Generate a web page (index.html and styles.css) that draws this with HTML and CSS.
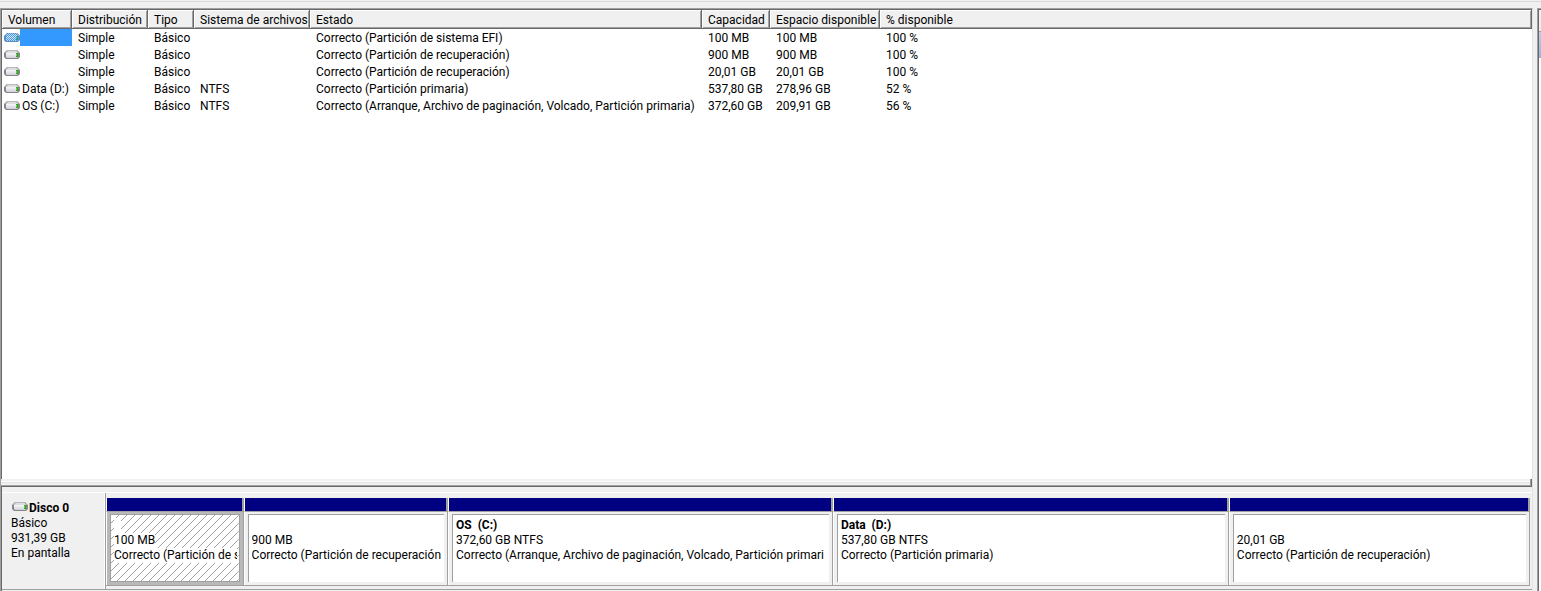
FILE: index.html
```html
<!DOCTYPE html>
<html lang="es">
<head>
  <meta charset="UTF-8" />
  <meta name="viewport" content="width=device-width, initial-scale=1.0" />
  <title>Administración de discos</title>
  <link rel="stylesheet" href="styles.css">
</head>
<body>
  <svg class="defs" width="0" height="0" aria-hidden="true">
    <defs>
      <linearGradient id="metal" x1="0" y1="0" x2="0" y2="1">
        <stop offset="0" stop-color="#f6f6fa" />
        <stop offset="1" stop-color="#d0d0da" />
      </linearGradient>
      <pattern id="dots" width="2" height="2" patternUnits="userSpaceOnUse">
        <rect width="1" height="1" fill="#3399ff" />
        <rect x="1" y="1" width="1" height="1" fill="#3399ff" />
      </pattern>
      <pattern id="lines" width="8" height="8" patternUnits="userSpaceOnUse">
        <path d="M0 7h1v1h-1zM1 6h1v1h-1zM2 5h1v1h-1zM3 4h1v1h-1zM4 3h1v1h-1zM5 2h1v1h-1zM6 1h1v1h-1zM7 0h1v1h-1z" fill="#a0a0a0" />
      </pattern>
      <symbol id="drive" viewBox="0 0 16 10">
        <path d="M3 1H13L16 4V8L14 10H2L0 8V4Z" fill="#85858c" />
        <path d="M3 1H13L15 4H1Z" fill="#b8b8bc" />
        <path d="M4 2H12L14 4H2Z" fill="#dededf" />
        <path d="M2 4H14V8L13 9H3L2 8Z" fill="url(#metal)" />
        <path d="M12 4h2v4h-2z" fill="#2fa51e" />
        <path d="M12 5h1v2h-1z" fill="#63d84a" />
      </symbol>
    </defs>
  </svg>

  <div class="toolbar-edge"></div>
  <div class="window">
    <main class="console">
      <section class="volumes">
        <table>
          <colgroup>
            <col class="col-volume"><col class="col-layout"><col class="col-type"><col class="col-fs">
            <col class="col-status"><col class="col-capacity"><col class="col-free"><col>
          </colgroup>
          <thead>
            <tr>
              <th>Volumen</th><th>Distribución</th><th>Tipo</th><th>Sistema de archivos</th>
              <th>Estado</th><th>Capacidad</th><th>Espacio disponible</th><th>% disponible</th>
            </tr>
          </thead>
          <tbody>
            <tr>
              <td><div class="volume"><svg class="drive"><use href="#drive" /><path d="M3 1H13L16 4V8L14 10H2L0 8V4Z" fill="url(#dots)" /></svg><span class="selected"></span></div></td>
              <td>Simple</td><td>Básico</td><td></td><td>Correcto (Partición de sistema EFI)</td><td>100 MB</td><td>100 MB</td><td>100 %</td>
            </tr>
            <tr>
              <td><div class="volume"><svg class="drive"><use href="#drive" /></svg></div></td>
              <td>Simple</td><td>Básico</td><td></td><td>Correcto (Partición de recuperación)</td><td>900 MB</td><td>900 MB</td><td>100 %</td>
            </tr>
            <tr>
              <td><div class="volume"><svg class="drive"><use href="#drive" /></svg></div></td>
              <td>Simple</td><td>Básico</td><td></td><td>Correcto (Partición de recuperación)</td><td>20,01 GB</td><td>20,01 GB</td><td>100 %</td>
            </tr>
            <tr>
              <td><div class="volume"><svg class="drive"><use href="#drive" /></svg><span class="name">Data (D:)</span></div></td>
              <td>Simple</td><td>Básico</td><td>NTFS</td><td>Correcto (Partición primaria)</td><td>537,80 GB</td><td>278,96 GB</td><td>52 %</td>
            </tr>
            <tr>
              <td><div class="volume"><svg class="drive"><use href="#drive" /></svg><span class="name">OS (C:)</span></div></td>
              <td>Simple</td><td>Básico</td><td>NTFS</td><td>Correcto (Arranque, Archivo de paginación, Volcado, Partición primaria)</td><td>372,60 GB</td><td>209,91 GB</td><td>56 %</td>
            </tr>
          </tbody>
        </table>
      </section>
      <div class="splitter"></div>
      <section class="disks">
        <div class="disk">
          <div class="disk-info">
            <div class="disk-name"><svg class="drive"><use href="#drive" /></svg><b>Disco 0</b></div>
            <div>Básico</div>
            <div>931,39 GB</div>
            <div>En pantalla</div>
          </div>
          <div class="partitions">
            <div class="partition efi active">
              <div class="bar"></div>
              <div class="body"><div class="box">
                <svg class="hatch" width="100%" height="100%"><rect width="100%" height="100%" fill="url(#lines)" /></svg>
                <b></b><span>100 MB</span><span>Correcto (Partición de s</span>
              </div></div>
            </div>
            <div class="partition recovery">
              <div class="bar"></div>
              <div class="body"><div class="box"><b></b><span>900 MB</span><span>Correcto (Partición de recuperación</span></div></div>
            </div>
            <div class="partition os">
              <div class="bar"></div>
              <div class="body"><div class="box"><b>OS&nbsp; (C:)</b><span>372,60 GB NTFS</span><span>Correcto (Arranque, Archivo de paginación, Volcado, Partición primari</span></div></div>
            </div>
            <div class="partition data">
              <div class="bar"></div>
              <div class="body"><div class="box"><b>Data&nbsp; (D:)</b><span>537,80 GB NTFS</span><span>Correcto (Partición primaria)</span></div></div>
            </div>
            <div class="partition spare">
              <div class="bar"></div>
              <div class="body"><div class="box"><b></b><span>20,01 GB</span><span>Correcto (Partición de recuperación)</span></div></div>
            </div>
          </div>
        </div>
      </section>
    </main>
    <aside class="actions"><div class="actions-head"></div><div class="actions-item"></div></aside>
  </div>
</body>
</html>
```
FILE: styles.css
```css
* {
  box-sizing: border-box;
}
body {
  margin: 0;
  height: 100vh;
  display: flex;
  flex-direction: column;
  overflow: hidden;
  background: #f0f0f0;
  color: #000;
  font: 12px/15px Roboto, "Noto Sans", sans-serif;
}
.defs {
  position: absolute;
}
.toolbar-edge {
  flex: none;
  height: 8px;
  border-top: 1px solid #f0f0f0;
  box-shadow: inset 0 1px #dadada;
}
.window {
  flex: 1;
  min-height: 0;
  display: flex;
  gap: 4px;
}
.console {
  flex: 1;
  min-width: 0;
  display: flex;
  flex-direction: column;
  border-top: 1px solid #a0a0a0;
  border-left: 1px solid #a0a0a0;
  border-right: 1px solid #e3e3e3;
}

/* volume list */
.volumes {
  flex: 1;
  min-height: 0;
  background: #fff;
  border-top: 1px solid #696969;
  border-left: 1px solid #696969;
}
table {
  width: 100%;
  table-layout: fixed;
  border-collapse: separate;
  border-spacing: 0;
}
.col-volume { width: 70px; }
.col-layout { width: 76px; }
.col-type { width: 46px; }
.col-fs { width: 116px; }
.col-status { width: 392px; }
.col-capacity { width: 68px; }
.col-free { width: 110px; }
th {
  height: 19px;
  padding: 3px 0 0 6px;
  background: #f0f0f0;
  border-right: 1px solid #696969;
  border-bottom: 1px solid #696969;
  box-shadow: inset 1px 1px #fff, inset -1px -1px #a0a0a0;
  font-weight: normal;
  text-align: left;
  white-space: nowrap;
}
td {
  height: 17px;
  padding: 2px 0 0 6px;
  white-space: nowrap;
}
td:first-child {
  padding: 0 0 0 2px;
}
.volume {
  display: flex;
  height: 17px;
}
.drive {
  flex: none;
  width: 16px;
  height: 10px;
}
.volume .drive {
  margin-top: 3px;
}
.name {
  padding: 2px 0 0 2px;
}
.selected {
  flex: 1;
  background: #3399ff;
}

.splitter {
  flex: none;
  height: 8px;
  background: #f0f0f0;
  border-bottom: 1px solid #696969;
  border-right: 1px solid #696969;
  box-shadow: inset -1px -1px #a0a0a0, inset 0 2px #f0f0f0, inset 0 3px #fff, inset 0 4px #e3e3e3;
}

/* graphical view */
.disks {
  flex: none;
  height: 104px;
  padding-top: 5px;
  border-left: 1px solid #696969;
}
.disk {
  display: flex;
  height: 98px;
  border-top: 1px solid #fff;
  border-bottom: 1px solid #a0a0a0;
}
.disk-info {
  flex: none;
  width: 104px;
  padding: 8px 9px;
  border-right: 1px solid #a0a0a0;
  box-shadow: inset -1px 0 #fff;
}
.disk-name {
  display: flex;
  gap: 1px;
  padding-left: 1px;
}
.partitions {
  flex: 1;
  min-width: 0;
  display: flex;
  padding: 5px 2px 3px 0;
}
.partition {
  flex-basis: 0;
  min-width: 0;
  display: flex;
  flex-direction: column;
  border-right: 1px solid #a0a0a0;
  border-bottom: 1px solid #a0a0a0;
}
.efi { flex-grow: 137; }
.recovery { flex-grow: 204; }
.os { flex-grow: 385; }
.data { flex-grow: 396; }
.spare { flex-grow: 301; }
.bar {
  height: 14px;
  background: #000080;
  border-left: 1px solid #fff;
  border-right: 1px solid #a0a0a0;
  border-bottom: 1px solid #a0a0a0;
}
.body {
  flex: 1;
  min-height: 0;
  padding: 2px 3px 3px;
  border-left: 1px solid #fff;
}
.active .body {
  background: #b9b9b9;
}
.box {
  position: relative;
  height: 100%;
  padding: 3px 2px 0 3px;
  display: flex;
  flex-direction: column;
  align-items: flex-start;
  background: #fff;
  border-top: 1px solid #a0a0a0;
  border-left: 1px solid #a0a0a0;
}
.box b,
.box span {
  max-width: 100%;
  min-height: 15px;
  overflow: hidden;
  white-space: nowrap;
}
.active .box {
  border: 1px solid #a0a0a0;
}
.active b,
.active span {
  position: relative;
  background: #fff;
}
.active b {
  width: 7px;
}
.hatch {
  position: absolute;
  inset: 0;
}

/* edge of the actions pane */
.actions {
  flex: none;
  width: 4px;
  border-top: 1px solid #a0a0a0;
  border-left: 1px solid #a0a0a0;
  background: #fff;
  box-shadow: inset 1px 1px #696969;
}
.actions-head {
  height: 22px;
  margin: 1px 0 0 1px;
  background: #f0f0f0;
  border-bottom: 1px solid #a0a0a0;
}
.actions-item {
  height: 26px;
  margin-left: 1px;
  background: linear-gradient(#b8cfe8, #98b8dc);
}
```
